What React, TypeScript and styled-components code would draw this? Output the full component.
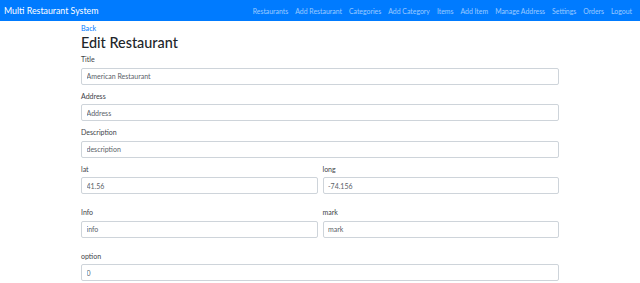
import React from "react";
import styled, { createGlobalStyle } from "styled-components";

const GlobalStyle = createGlobalStyle`
  body {
    margin: 0;
    background: #ffffff;
    font-family: 'Lato', 'Open Sans', sans-serif;
    color: #212529;
  }
`

const Navbar = styled.nav`
  display: flex;
  align-items: center;
  justify-content: space-between;
  height: 21px;
  padding: 0 4.5px 0 4px;
  background: #007bff;
  box-sizing: border-box;
`
const Brand = styled.a`
  font-size: 8.8px;
  color: #ffffff;
  text-decoration: none;
  white-space: nowrap;
`
const NavLinks = styled.div`
  display: flex;
  align-items: center;
`
const NavLink = styled.a`
  padding: 0 3.5px;
  font-size: 6.9px;
  color: rgba(255, 255, 255, 0.6);
  text-decoration: none;
  white-space: nowrap;
`

const Container = styled.div`
  width: 478px;
  margin: 0 auto;
  padding-top: 3px;
`
const BackLink = styled.a`
  display: block;
  font-size: 7.2px;
  line-height: 10px;
  color: #007bff;
  text-decoration: none;
`
const Heading = styled.h1`
  margin: 0 0 2px 0;
  font-size: 14.4px;
  font-weight: 500;
  line-height: 18px;
  color: #212529;
`
const Group = styled.div`
  display: flex;
  flex-direction: column;
  margin-bottom: 6px;
  flex: 1;
`
const Row = styled.div<{ $extra?: number }>`
  display: flex;
  gap: 5px;
  margin-bottom: ${(p) => p.$extra || 0}px;
`
const Label = styled.label`
  font-size: 7px;
  line-height: 11px;
  margin-bottom: 2.5px;
  color: #3d4247;
`
const Input = styled.input`
  box-sizing: border-box;
  width: 100%;
  height: 17px;
  padding: 0 4.5px;
  border: 1px solid #ced4da;
  border-radius: 2px;
  background: #ffffff;
  font-family: 'Lato', 'Open Sans', sans-serif;
  font-size: 7px;
  color: #5a6168;
  outline: none;
`

const links = [
  "Restaurants",
  "Add Restaurant",
  "Categories",
  "Add Category",
  "Items",
  "Add Item",
  "Manage Address",
  "Settings",
  "Orders",
  "Logout",
]

function Field({ label, value }: { label: string; value: string }) {
  return (
    <Group>
      <Label>{label}</Label>
      <Input defaultValue={value} />
    </Group>
  )
}

export default function App() {
  return (
    <>
      <GlobalStyle />
      <Navbar>
        <Brand href="#">Multi Restaurant System</Brand>
        <NavLinks>
          {links.map((l) => (
            <NavLink key={l} href="#">{l}</NavLink>
          ))}
        </NavLinks>
      </Navbar>
      <Container>
        <BackLink href="#">Back</BackLink>
        <Heading>Edit Restaurant</Heading>
        <Field label="Title" value="American Restaurant" />
        <Field label="Address" value="Address" />
        <Field label="Description" value="description" />
        <Row $extra={7}>
          <Field label="lat" value="41.56" />
          <Field label="long" value="-74.156" />
        </Row>
        <Row $extra={7}>
          <Field label="Info" value="info" />
          <Field label="mark" value="mark" />
        </Row>
        <Field label="option" value="0" />
      </Container>
    </>
  )
}
